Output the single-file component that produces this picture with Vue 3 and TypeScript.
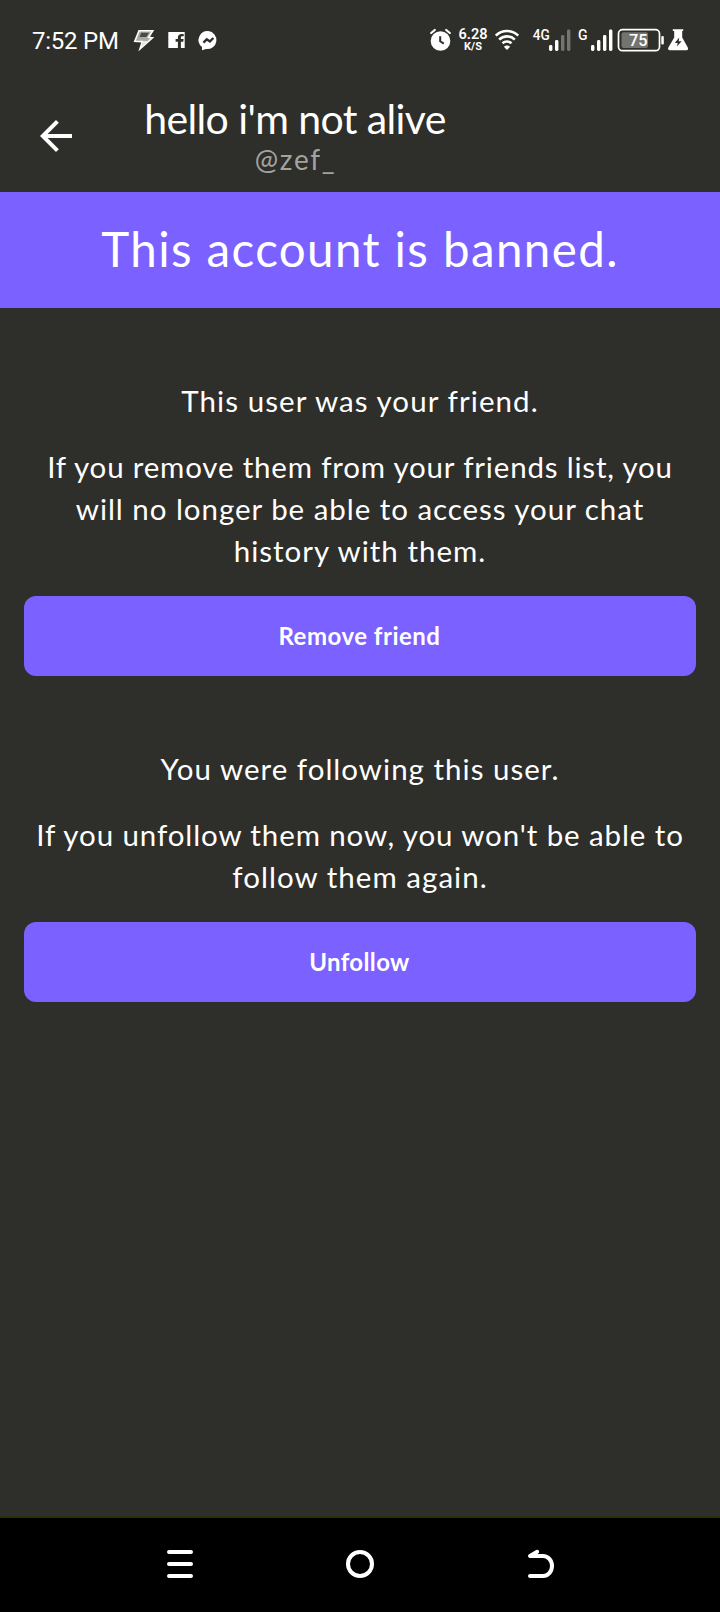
<script setup lang="ts">
interface Line { text: string; fit: string }
interface Section { lead: Line; body: Line[]; action: string; fit: string }
interface Bar { x: number; y: number; dim?: boolean }

const sections: Section[] = [
  {
    lead: { text: 'This user was your friend.', fit: 'ls-108' },
    body: [
      { text: 'If you remove them from your friends list, you', fit: 'ls-81' },
      { text: 'will no longer be able to access your chat', fit: 'ls-96' },
      { text: 'history with them.', fit: 'ls-101' }
    ],
    action: 'Remove friend',
    fit: 'ls-50'
  },
  {
    lead: { text: 'You were following this user.', fit: 'ls-101' },
    body: [
      { text: "If you unfollow them now, you won't be able to", fit: 'ls-90' },
      { text: 'follow them again.', fit: 'ls-104' }
    ],
    action: 'Unfollow',
    fit: 'ls-35'
  }
]

const weakBars: Bar[] = [
  { x: 27, y: 17 },
  { x: 33, y: 12 },
  { x: 39, y: 7, dim: true },
  { x: 45, y: 1.5, dim: true }
]
const fullBars: Bar[] = [
  { x: 17, y: 17 },
  { x: 23, y: 12 },
  { x: 29, y: 7 },
  { x: 35, y: 1.5 }
]
</script>

<template>
  <div class="screen">
    <div class="status">
      <span class="clock">7:52 PM</span>
      <div class="status-left">
        <svg width="32" height="24" viewBox="130 28 32 24">
          <path d="M139 30.8 L152.8 30.8 L148.6 37.4 L152.4 37.8 L140 49 L142.4 41.6 L134.8 41.2 Z" fill="#a9a9a6" stroke="#fff" stroke-width="1.6" />
          <path d="M141.2 32.8 H149 L146.3 37 H139.6 Z" fill="#4b4b46" />
          <path d="M143.5 41 H148.4 L141.4 47 Z" fill="#e8e8e6" />
        </svg>
        <svg width="30" height="24" viewBox="162 28 30 24">
          <path fill="#fff" fill-rule="evenodd" d="M168.3 32 H184.7 V48 H180.9 V41.7 H183.2 L183.6 39 H180.9 V37.5 C180.9 36.6 181.3 36.2 182.2 36.2 H183.7 V33.9 H181.6 C179.2 33.9 177.9 35.2 177.9 37.2 V39 H175.6 V41.7 H177.9 V48 H168.3 Z" />
        </svg>
        <svg width="32" height="24" viewBox="192 28 32 24">
          <path fill="#fff" d="M208.3 31 A9.2 9 0 1 1 206 49 L202 50.3 V47 A9.2 9 0 0 1 208.3 31 Z" />
          <path d="M203.4 42.6 L206.8 39.3 L209.9 41.4 L213.4 38" fill="none" stroke="#2e2e2a" stroke-width="2.3" />
        </svg>
      </div>
      <div class="status-right">
        <svg width="28" height="28" viewBox="428 26 28 28">
          <circle cx="440.5" cy="41" r="9.8" fill="#fff" />
          <path d="M431.2 33 L434.8 30 M446.2 30 L449.8 33" stroke="#fff" stroke-width="2.2" stroke-linecap="round" />
          <path d="M440.2 36.2 V41.3 L443.8 43.6" fill="none" stroke="#2e2e2a" stroke-width="2" />
        </svg>
        <div class="speed">
          <span class="rate">6.28</span>
          <span class="unit">K/S</span>
        </div>
        <svg width="30" height="28" viewBox="492 26 30 28">
          <g fill="none" stroke="#fff" stroke-width="2.6">
            <path d="M495.8 35.6 A15.8 15.8 0 0 1 518.2 35.6" />
            <path d="M499.2 39.6 A11 11 0 0 1 514.8 39.6" />
            <path d="M502.5 43.3 A6.6 6.6 0 0 1 511.5 43.3" />
          </g>
          <path d="M507 50 L503.9 46.7 A4.4 4.4 0 0 1 510.1 46.7 Z" fill="#fff" />
        </svg>
        <svg class="signal" width="52" height="28" viewBox="0 -2 52 28">
          <text x="10.8" y="12.2" textLength="17" lengthAdjust="spacingAndGlyphs">4G</text>
          <rect v-for="b in weakBars" :key="b.x" :x="b.x" :y="b.y" width="3.4" :height="23 - b.y" rx="1.4" :class="{ dim: b.dim }" />
        </svg>
        <svg class="signal" width="41" height="28" viewBox="0 -2 41 28">
          <text x="4" y="12.2">G</text>
          <rect v-for="b in fullBars" :key="b.x" :x="b.x" :y="b.y" width="3.4" :height="23 - b.y" rx="1.4" />
        </svg>
        <svg class="battery" width="51" height="28" viewBox="615 26 51 28">
          <rect x="618.5" y="29.7" width="41" height="21" rx="4" fill="none" stroke="#fff" stroke-width="1.7" />
          <rect x="621.5" y="32.3" width="26.5" height="15.8" rx="2" fill="#73736f" />
          <rect x="661.3" y="36" width="2.5" height="8.5" rx="1" fill="#fff" />
          <text x="629" y="45.6" textLength="18.5" lengthAdjust="spacingAndGlyphs">75</text>
        </svg>
        <svg width="24" height="28" viewBox="666 26 24 28">
          <path d="M672.8 29.2 H683.2 V31 H682.2 V37.5 L687.8 47.6 C688.6 49.2 687.8 50.2 686.4 50.2 H669.8 C668.3 50.2 667.6 49.1 668.4 47.6 L674.2 37.5 V31 H672.8 Z" fill="#fff" />
          <path d="M679.2 37.5 L674.8 43 H677.7 L677 46.6 L681.6 41.2 H678.7 Z" fill="#2e2e2a" />
        </svg>
      </div>
    </div>

    <header class="header">
      <svg class="back" width="48" height="48" viewBox="0 0 24 24">
        <path fill="#fff" d="M20 11H7.83l5.59-5.59L12 4l-8 8 8 8 1.41-1.41L7.83 13H20v-2z" />
      </svg>
      <div class="who">
        <h1 class="name">hello i'm not alive</h1>
        <span class="handle">@zef_</span>
      </div>
    </header>

    <div class="banner">This account is banned.</div>

    <main class="content">
      <section v-for="s in sections" :key="s.action" class="section">
        <p class="para"><span :class="s.lead.fit">{{ s.lead.text }}</span></p>
        <p class="para">
          <span v-for="l in s.body" :key="l.text" :class="l.fit">{{ l.text }}</span>
        </p>
        <button class="action" :class="s.fit" type="button">{{ s.action }}</button>
      </section>
    </main>

    <nav class="nav">
      <svg width="32" height="32" viewBox="164 1548 32 32">
        <path d="M169 1552 H191 M169 1564 H191 M169 1576 H191" stroke="#fff" stroke-width="4" stroke-linecap="round" />
      </svg>
      <svg width="32" height="32" viewBox="344 1548 32 32">
        <circle cx="360" cy="1564" r="12" fill="none" stroke="#fff" stroke-width="4" />
      </svg>
      <svg width="32" height="32" viewBox="524 1548 32 32">
        <path d="M537.2 1551.8 L530 1556 H543 A9 10 0 0 1 543 1576 H530" fill="none" stroke="#fff" stroke-width="4" stroke-linecap="round" stroke-linejoin="round" />
      </svg>
    </nav>
  </div>
</template>

<style>
body {
  margin: 0;
  background: #2e2e2a;
}
</style>

<style scoped>
.screen {
  display: flex;
  flex-direction: column;
  width: 720px;
  height: 1612px;
  background: #2e2e2a;
  color: #fff;
  font-family: Lato, "Open Sans", sans-serif;
}
svg {
  display: block;
  flex: none;
}
.status {
  display: flex;
  align-items: center;
  height: 80px;
  box-sizing: border-box;
  padding: 0 30px 0 32px;
  font-family: Roboto, sans-serif;
}
.clock {
  width: 98px;
  padding-top: 2px;
  font-size: 24px;
  line-height: 28px;
  letter-spacing: -0.23px;
  white-space: nowrap;
}
.status-left,
.status-right {
  display: flex;
  align-items: center;
}
.status-right {
  margin-left: auto;
}
.speed {
  display: flex;
  flex-direction: column;
  align-items: center;
  width: 34px;
  padding: 0 2px 1px 0;
  font-weight: 600;
}
.rate {
  font-size: 14.5px;
  line-height: 13px;
}
.unit {
  font-size: 11px;
  line-height: 11px;
  font-weight: 700;
}
.signal {
  fill: #fff;
}
.signal text {
  font-size: 14px;
  font-weight: 500;
}
.signal .dim {
  fill: #73736f;
}
.battery text {
  font-size: 16px;
  font-weight: 500;
  fill: #fff;
}
.header {
  display: flex;
  align-items: center;
  height: 112px;
  padding-left: 32px;
}
.who {
  display: flex;
  flex-direction: column;
  align-items: center;
  width: 304px;
  margin-left: 63px;
  padding-bottom: 2px;
}
.name {
  margin: 0;
  font-size: 41px;
  font-weight: 400;
  line-height: 48px;
  letter-spacing: -0.6px;
  white-space: nowrap;
}
.handle {
  padding-left: 1px;
  color: #a3a3a0;
  font-size: 28px;
  line-height: 33px;
  letter-spacing: 1.7px;
}
.banner {
  display: flex;
  align-items: center;
  justify-content: center;
  height: 116px;
  box-sizing: border-box;
  padding-bottom: 3px;
  background: #7b61ff;
  font-size: 47.5px;
  letter-spacing: 1.4px;
}
.content {
  flex: 1;
  padding: 0 24px;
}
.section {
  display: flex;
  flex-direction: column;
  gap: 24px;
  padding-top: 72px;
}
.para {
  display: flex;
  flex-direction: column;
  align-items: center;
  margin: 0;
  font-size: 29.5px;
  line-height: 42px;
  white-space: nowrap;
}
.action {
  height: 80px;
  padding: 0 1px 1px 0;
  border: 0;
  border-radius: 12px;
  background: #7b61ff;
  color: #fff;
  font-family: inherit;
  font-size: 24px;
  font-weight: 700;
}
.ls-35 { letter-spacing: 0.35px; }
.ls-50 { letter-spacing: 0.5px; }
.ls-81 { letter-spacing: 0.81px; }
.ls-90 { letter-spacing: 0.9px; }
.ls-96 { letter-spacing: 0.96px; }
.ls-101 { letter-spacing: 1.01px; }
.ls-104 { letter-spacing: 1.04px; }
.ls-108 { letter-spacing: 1.08px; }
.nav {
  display: grid;
  grid-template-columns: repeat(3, 180px);
  justify-content: center;
  justify-items: center;
  align-items: center;
  height: 96px;
  box-sizing: border-box;
  padding-bottom: 2px;
  border-top: 2px solid #2b2e08;
  background: #000;
}
</style>
